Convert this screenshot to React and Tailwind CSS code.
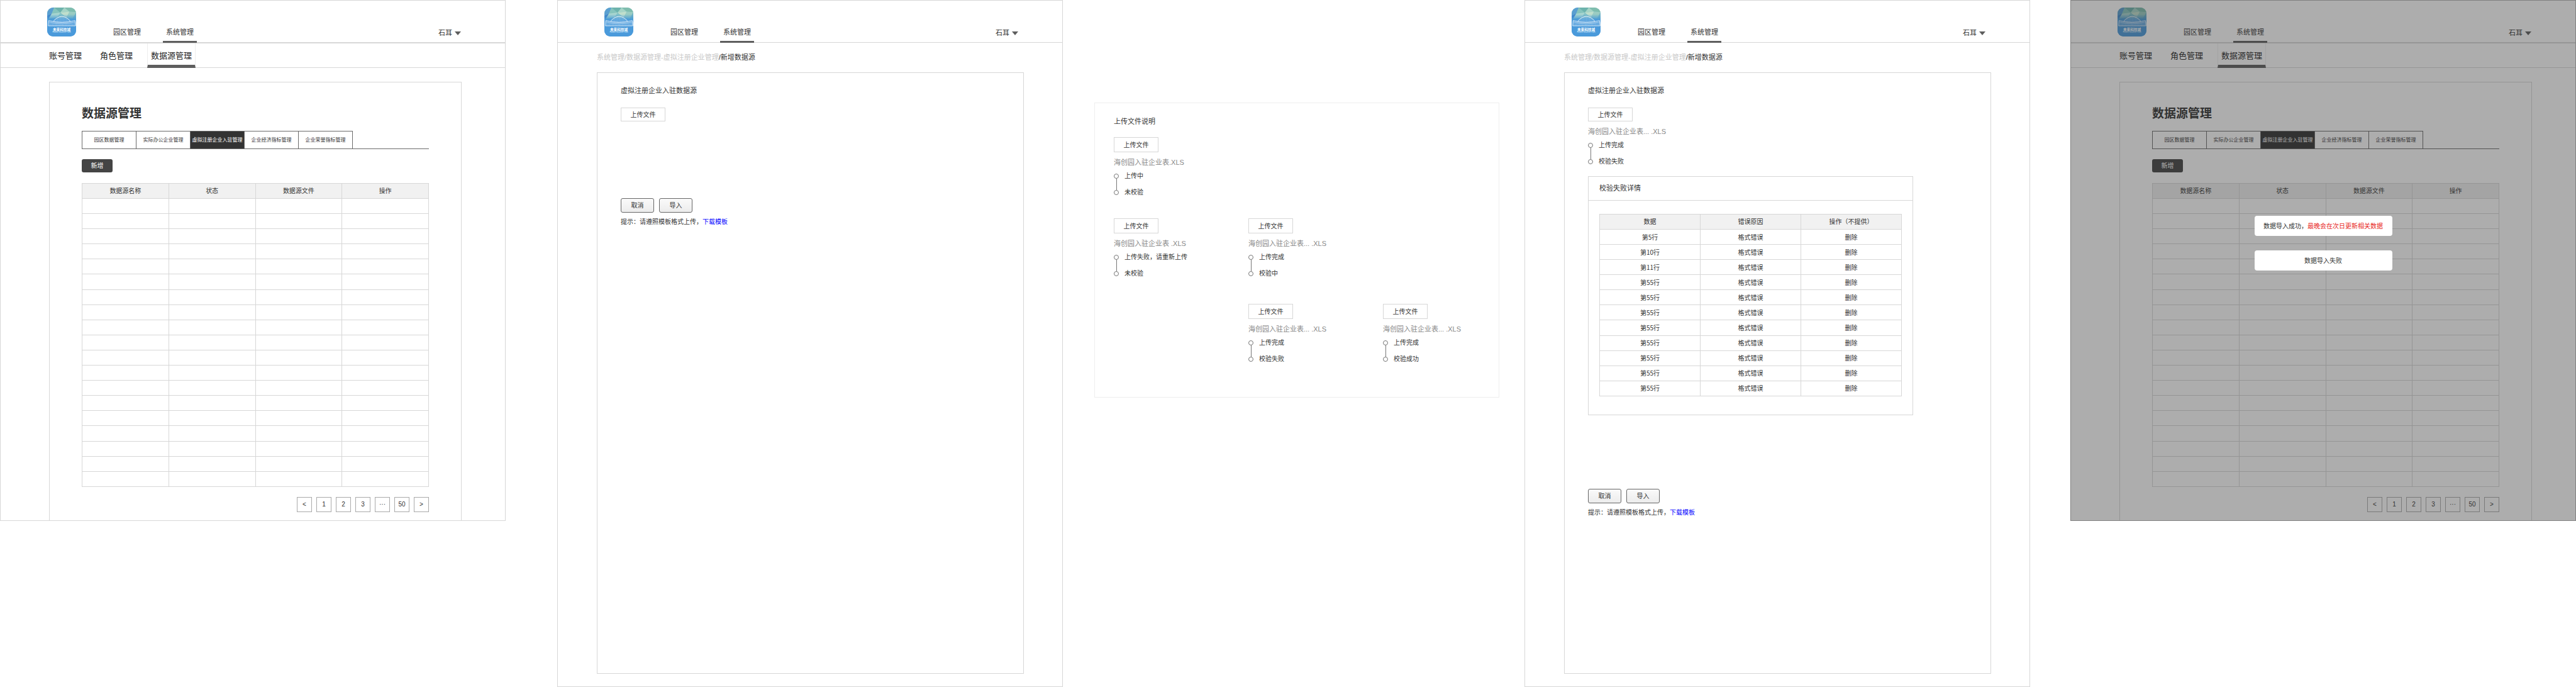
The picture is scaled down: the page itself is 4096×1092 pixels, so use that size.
import React from "react";

const BASE_FONT =
  "font-['Liberation_Sans','Noto_Sans_CJK_SC',sans-serif]";
const CJK_FONT = "font-['Noto_Sans_CJK_SC',sans-serif]";

function Logo() {
  const hangers = Array.from({ length: 15 }, (_, i) => {
    const x = 14 + i * 2.15;
    const t = (x - 29) / 17;
    return { x, y: 17.5 + 8.5 * t * t };
  });
  const lattice = Array.from({ length: 19 }, (_, i) => 3 + i * 2.85);
  return (
    <svg viewBox="0 0 57 57" className="mt-[11px] size-[46px] shrink-0" role="img" aria-label="未来科技城">
      <defs>
        <linearGradient id="sky" x1="0" y1="0" x2="0" y2="1">
          <stop offset="0" stopColor="#7fc0c0" />
          <stop offset="0.28" stopColor="#8cc6cb" />
          <stop offset="0.46" stopColor="#4a9bd6" />
          <stop offset="1" stopColor="#4a98dc" />
        </linearGradient>
        <linearGradient id="fade" x1="0" y1="0" x2="0" y2="1">
          <stop offset="0" stopColor="#4a9bd6" stopOpacity="0" />
          <stop offset="1" stopColor="#4a9bd6" />
        </linearGradient>
        <clipPath id="tile">
          <rect width="57" height="57" rx="12" />
        </clipPath>
      </defs>
      <g clipPath="url(#tile)">
        <rect width="57" height="57" fill="url(#sky)" />
        <path d="M0 0H14L9 12L0 16Z" fill="#5a9fd0" />
        <path d="M0 16L9 12L3 22L0 22Z" fill="#3f7fc8" />
        <path d="M14 0L26 10L9 12Z" fill="#86c4bd" />
        <path d="M26 10L20 20L3 22L9 12Z" fill="#a9d6cf" />
        <path d="M14 0H34L26 10Z" fill="#6db3ac" />
        <path d="M34 0L44 8L26 10Z" fill="#a6d4c6" />
        <path d="M34 0H57V9L44 8Z" fill="#7fbdae" />
        <path d="M26 10L44 8L38 20Z" fill="#c0dfcc" />
        <path d="M44 8L57 9L50 22L38 20Z" fill="#9accc2" />
        <path d="M26 10L38 20L20 20Z" fill="#86c3c6" />
        <path d="M57 9V24L50 22Z" fill="#74b5c4" />
        <rect y="13" width="57" height="11" fill="url(#fade)" />
        <rect y="24" width="57" height="33" fill="#4a9adb" />
        <g fill="none" stroke="#fff">
          <path d="M12 27Q29 8 46 27" strokeWidth="1" />
          <path d="M3 25.5Q29 33 55 25.5" strokeWidth="0.9" />
          <path d="M3 28Q29 36 55 28" strokeWidth="0.5" />
          <path d="M3 25.5L2 36H56L55 25.5" strokeWidth="0.9" />
          {hangers.map((h) => (
            <path key={h.x} d={`M${h.x} ${h.y}V28.5`} strokeWidth="0.4" opacity="0.8" />
          ))}
          {lattice.map((x) => (
            <path key={x} d={`M${x} 27.5L${x + 1.4} 36L${x + 2.4} 28`} strokeWidth="0.4" opacity="0.7" />
          ))}
        </g>
        <text x="28.5" y="46" textAnchor="middle" fill="#fff" fontSize="7" fontWeight="700" className={CJK_FONT}>
          未来科技城
        </text>
        <text x="28.5" y="50" textAnchor="middle" fill="#d9ecfb" fontSize="4">
          Future Science Park
        </text>
      </g>
    </svg>
  );
}

function Header({ thick = false }) {
  return (
    <header
      className={
        "flex border-[#d7d7d7] pr-[70px] pl-[74px] " +
        (thick ? "h-[68px] border-b-2" : "h-[67px] border-b")
      }
    >
      <Logo />
      <nav className="-mb-px ml-[54px] flex gap-[30px] text-[11px] leading-4">
        <a href="#park" className="flex items-end border-b-[3px] border-transparent px-[5px] pb-[6px]">
          园区管理
        </a>
        <a href="#system" className="flex items-end border-b-[3px] border-[#5e5e5e] px-[5px] pb-[6px]">
          系统管理
        </a>
      </nav>
      <button type="button" className="ml-auto flex items-end gap-1 pb-[7px] text-[11px] leading-4">
        石耳
        <svg viewBox="0 0 10 6" className="mb-1 h-[6px] w-[10px]" aria-hidden="true">
          <path d="M0 0H10L5 6Z" fill="#5e5e5e" />
        </svg>
      </button>
    </header>
  );
}

const TABS = ["园区数据管理", "实际办公企业管理", "虚拟注册企业入驻管理", "企业经济指标管理", "企业荣誉指标管理"];
const COLUMNS = ["数据源名称", "状态", "数据源文件", "操作"];
const PAGES = ["<", "1", "2", "3", "···", "50", ">"];

function ListScreen({ className = "", children }) {
  const item = "flex items-center border-b-[5px] pt-[6px]";
  return (
    <section className={"relative border border-[#d7d7d7] bg-white " + className}>
      <Header thick />
      <nav className="flex h-[39px] border-b border-[#d7d7d7] pl-[77px] text-[13px] leading-4 text-[#222]">
        <a href="#accounts" className={item + " border-transparent"}>账号管理</a>
        <a href="#roles" className={item + " ml-[29px] border-transparent"}>角色管理</a>
        <a
          href="#sources"
          className="-mb-px ml-[23px] flex items-center border-x border-b-[5px] border-x-[#eee] border-b-[#5e5e5e] px-[5px] pt-[6px]"
        >
          数据源管理
        </a>
      </nav>
      <div className="mt-[22px] mr-[69px] ml-[77px] border border-b-0 border-[#d7d7d7] px-[51px] pt-[38px] pb-[13px]">
        <h1 className="text-[19px] leading-6 font-bold">数据源管理</h1>
        <div className="mt-[15px] flex h-[29px] border-b border-[#6a6a6a] text-[8px]">
          {TABS.map((tab, i) => (
            <button
              key={tab}
              type="button"
              className={
                "w-[86px] border-t border-l border-[#6a6a6a] whitespace-nowrap last:w-[87px] last:border-r " +
                (i === 2 ? "bg-[#333] text-white" : "")
              }
            >
              {tab}
            </button>
          ))}
        </div>
        <button type="button" className="mt-4 block h-[21px] w-[49px] rounded-[3px] bg-[#444] text-[10px] text-white">
          新增
        </button>
        <table className="mt-[17px] h-[483px] w-full table-fixed border-collapse text-[10px] leading-4">
          <thead>
            <tr className="h-6 bg-[#f1f1f1]">
              {COLUMNS.map((c) => (
                <th key={c} className="border border-[#d7d7d7] p-0 font-normal">{c}</th>
              ))}
            </tr>
          </thead>
          <tbody>
            {Array.from({ length: 19 }, (_, r) => (
              <tr key={r} className="h-6">
                {COLUMNS.map((c) => (
                  <td key={c} className="border border-[#d7d7d7] p-0" />
                ))}
              </tr>
            ))}
          </tbody>
        </table>
        <div className="mt-4 flex justify-end gap-[7px] text-[10px]">
          {PAGES.map((p) => (
            <button key={p} type="button" className="size-6 border border-[#aaa] leading-none">{p}</button>
          ))}
        </div>
      </div>
      {children}
    </section>
  );
}

function UploadButton({ className }) {
  return (
    <button type="button" className={"block w-[71px] border border-[#d7d7d7] bg-white text-[10px] " + className}>
      上传文件
    </button>
  );
}

function UploadStatus({ file, steps }) {
  return (
    <>
      <p className="mt-2 text-[11px] leading-4 whitespace-pre text-[#888]">{file}</p>
      <div className="mt-[6px] flex gap-[9px]">
        <div className="flex flex-col items-center py-1">
          <span className="size-2 rounded-full border border-[#777]" />
          <span className="w-px flex-1 bg-[#777]" />
          <span className="size-2 rounded-full border border-[#777]" />
        </div>
        <ol className="flex flex-col gap-[10px] text-[10px] leading-4 whitespace-nowrap">
          <li>{steps[0]}</li>
          <li>{steps[1]}</li>
        </ol>
      </div>
    </>
  );
}

function FormActions() {
  const button =
    "h-[23px] w-[53px] rounded-[3px] border border-[#666] bg-linear-to-b from-[#fafafa] to-[#ececec] text-[10px]";
  return (
    <>
      <div className="flex gap-2">
        <button type="button" className={button}>取消</button>
        <button type="button" className={button}>导入</button>
      </div>
      <p className="mt-[7px] text-[10px] leading-4">
        提示：请遵照模板格式上传，<a href="#template" className="text-[#00f]">下载模板</a>
      </p>
    </>
  );
}

function FormScreen({ className, children }) {
  return (
    <section className={"flex flex-col self-stretch border border-[#d7d7d7] bg-white pb-5 " + className}>
      <Header />
      <nav className="mt-[15px] ml-[62px] text-[11px] leading-4 text-[#c8c8c8]">
        系统管理/数据源管理-虚拟注册企业管理<span className="text-[#333]">/新增数据源</span>
      </nav>
      <div className="mt-4 mr-[61px] ml-[62px] flex-1 border border-[#d7d7d7] pt-5 pl-[37px]">
        <h2 className="text-[11px] leading-4">虚拟注册企业入驻数据源</h2>
        <UploadButton className="mt-[19px] h-[22px]" />
        {children}
      </div>
    </section>
  );
}

const FAILED_ROWS = ["第5行", "第10行", "第11行", ...Array(8).fill("第55行")];

function FailureDetails() {
  const cell = "border border-[#d7d7d7] p-0 text-center font-normal";
  return (
    <div className="mt-[15px] mr-[123px] border border-[#d7d7d7] pb-[29px]">
      <h3 className="flex h-[38px] items-center border-b border-[#d7d7d7] px-[17px] text-[11px]">校验失败详情</h3>
      <div className="px-[17px] pt-[21px]">
        <table className="h-[290px] w-full table-fixed border-collapse text-[10px] leading-4">
          <thead>
            <tr className="h-6 bg-[#f1f1f1]">
              <th className={cell}>数据</th>
              <th className={cell}>错误原因</th>
              <th className={cell}>操作（不提供）</th>
            </tr>
          </thead>
          <tbody className={CJK_FONT}>
            {FAILED_ROWS.map((row, i) => (
              <tr key={i} className="h-6">
                <td className={cell}>{row}</td>
                <td className={cell}>格式错误</td>
                <td className={cell}>删除</td>
              </tr>
            ))}
          </tbody>
        </table>
      </div>
    </div>
  );
}

const STATES = [
  { place: "col-start-1", file: "海创园入驻企业表.XLS", steps: ["上传中", "未校验"] },
  { place: "col-start-1", file: "海创园入驻企业表 .XLS", steps: ["上传失败，请重新上传", "未校验"] },
  { place: "col-start-2", file: "海创园入驻企业表... .XLS", steps: ["上传完成", "校验中"] },
  { place: "col-start-2 pt-[7px]", file: "海创园入驻企业表... .XLS", steps: ["上传完成", "校验失败"] },
  { place: "col-start-3 pt-[7px]", file: "海创园入驻企业表... .XLS", steps: ["上传完成", "校验成功"] },
];

function UploadNotes() {
  return (
    <section className="mt-[163px] ml-[50px] border border-[#eee] pt-[21px] pb-[52px] pl-[30px]">
      <h2 className="text-[11px] leading-4">上传文件说明</h2>
      <div className="mt-[17px] grid grid-cols-[1fr_1fr_184px] gap-y-[33px]">
        {STATES.map((s, i) => (
          <div key={i} className={s.place}>
            <UploadButton className="h-6" />
            <UploadStatus file={s.file} steps={s.steps} />
          </div>
        ))}
      </div>
    </section>
  );
}

function ImportOverlay() {
  const toast = "flex h-8 w-[219px] items-center justify-center rounded-[4px] bg-white text-[10px]";
  return (
    <div className="absolute -inset-px flex flex-col items-center gap-[23px] border border-[#808080] bg-[#333]/40 pt-[342px]">
      <div role="status" className={toast}>
        数据导入成功，<span className="text-[#e8261c]">最晚会在次日更新相关数据</span>
      </div>
      <div role="status" className={toast}>数据导入失败</div>
    </div>
  );
}

export default function App() {
  return (
    <main
      lang="zh-CN"
      className={
        "grid min-h-screen grid-cols-[804fr_886fr_694fr_844fr_868fr] items-start bg-white text-[#333] " + BASE_FONT
      }
    >
      <ListScreen />
      <FormScreen className="ml-[82px]">
        <div className="mt-[122px]">
          <FormActions />
        </div>
      </FormScreen>
      <UploadNotes />
      <FormScreen className="ml-10">
        <UploadStatus file="海创园入驻企业表... .XLS" steps={["上传完成", "校验失败"]} />
        <FailureDetails />
        <div className="mt-[117px]">
          <FormActions />
        </div>
      </FormScreen>
      <ListScreen className="ml-16">
        <ImportOverlay />
      </ListScreen>
    </main>
  );
}
